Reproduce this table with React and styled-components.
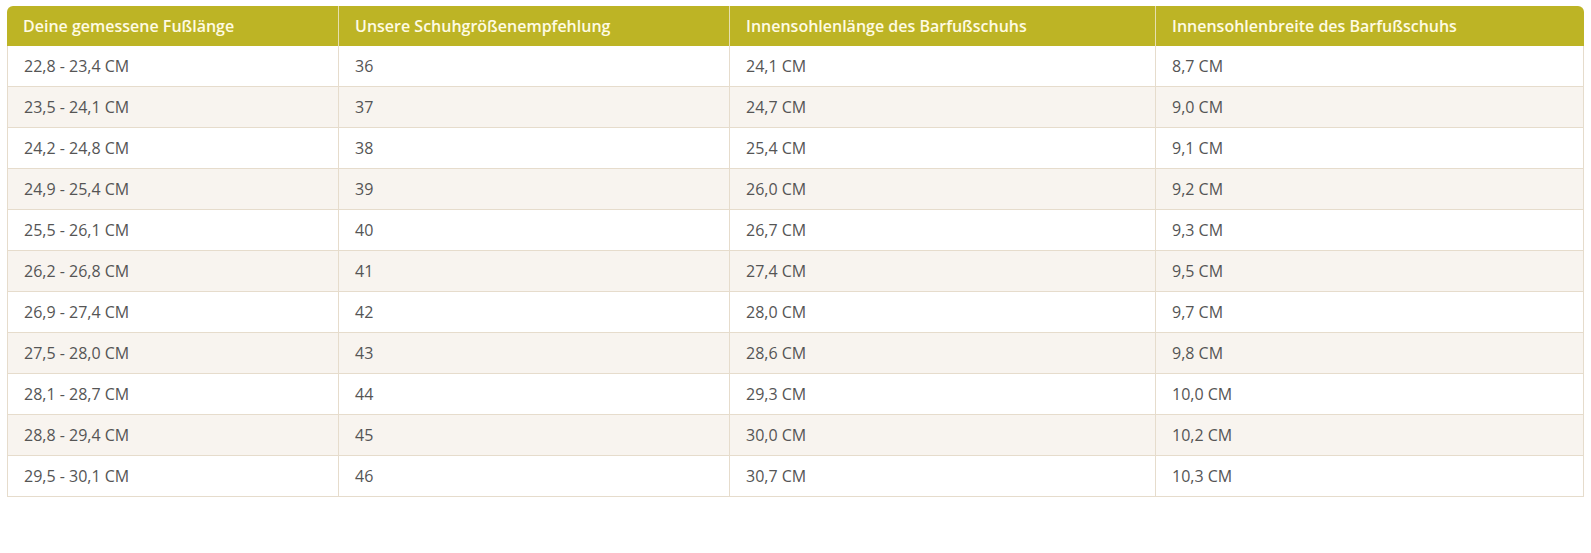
import React from "react";
import styled, { createGlobalStyle } from "styled-components";

const GlobalStyle = createGlobalStyle`
  body {
    margin: 0;
    background: #fff;
    font-family: "Open Sans", "Liberation Sans", sans-serif;
  }
`;

const Page = styled.div`
  padding: 6px 7px;
`;

const Table = styled.table`
  width: 1577px;
  border-collapse: separate;
  border-spacing: 0;
  table-layout: fixed;
  font-size: 16px;
  color: #555;
`;

const Th = styled.th`
  background-color: #bdb425;
  color: #fffbe3;
  font-weight: 600;
  text-align: left;
  height: 40px;
  padding: 0 16px;
  border-left: 1px solid #e6dfb0;
  box-sizing: border-box;
  &:first-child {
    border-left: none;
    border-top-left-radius: 6px;
  }
  &:last-child {
    border-top-right-radius: 6px;
  }
`;

const Tr = styled.tr`
  background-color: ${(p) => (p.$odd ? "#f8f4ef" : "#fff")};
`;

const Td = styled.td`
  height: 40px;
  padding: 0 16px;
  border-bottom: 1px solid #e6dccc;
  border-left: 1px solid #e6dccc;
  &:last-child {
    border-right: 1px solid #e6dccc;
  }
`;

const cols = [331, 391, 426, 429];

const headers = [
  "Deine gemessene Fußlänge",
  "Unsere Schuhgrößenempfehlung",
  "Innensohlenlänge des Barfußschuhs",
  "Innensohlenbreite des Barfußschuhs",
];

const rows = [
  ["22,8 - 23,4 CM", "36", "24,1 CM", "8,7 CM"],
  ["23,5 - 24,1 CM", "37", "24,7 CM", "9,0 CM"],
  ["24,2 - 24,8 CM", "38", "25,4 CM", "9,1 CM"],
  ["24,9 - 25,4 CM", "39", "26,0 CM", "9,2 CM"],
  ["25,5 - 26,1 CM", "40", "26,7 CM", "9,3 CM"],
  ["26,2 - 26,8 CM", "41", "27,4 CM", "9,5 CM"],
  ["26,9 - 27,4 CM", "42", "28,0 CM", "9,7 CM"],
  ["27,5 - 28,0 CM", "43", "28,6 CM", "9,8 CM"],
  ["28,1 - 28,7 CM", "44", "29,3 CM", "10,0 CM"],
  ["28,8 - 29,4 CM", "45", "30,0 CM", "10,2 CM"],
  ["29,5 - 30,1 CM", "46", "30,7 CM", "10,3 CM"],
];

const App = () => {
  return (
    <Page>
      <GlobalStyle />
      <Table>
        <colgroup>
          {cols.map((w, i) => (
            <col key={i} style={{ width: w }} />
          ))}
        </colgroup>
        <thead>
          <tr>
            {headers.map((h) => (
              <Th key={h}>{h}</Th>
            ))}
          </tr>
        </thead>
        <tbody>
          {rows.map((r, i) => (
            <Tr key={i} $odd={i % 2 === 1}>
              {r.map((c, j) => (
                <Td key={j}>{c}</Td>
              ))}
            </Tr>
          ))}
        </tbody>
      </Table>
    </Page>
  );
};

export default App;
